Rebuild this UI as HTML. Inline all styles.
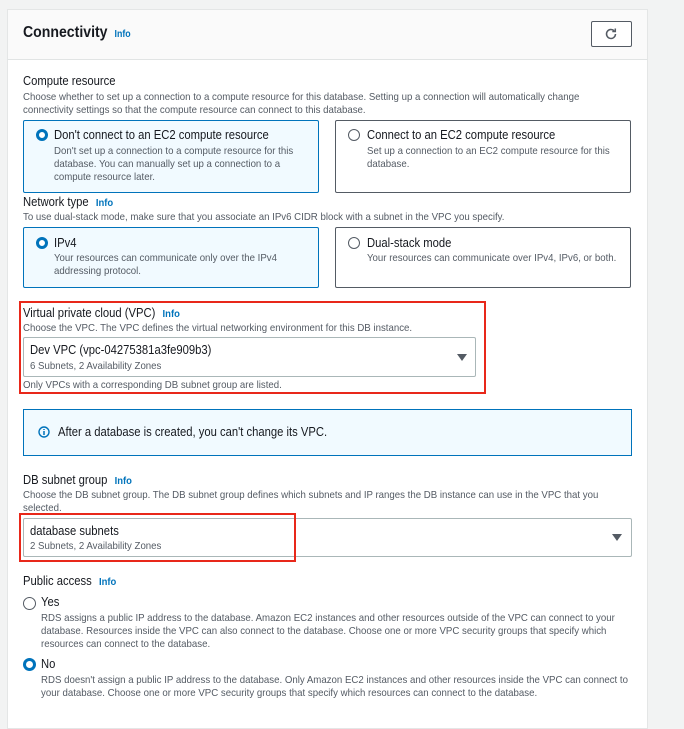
<!DOCTYPE html>
<html><head><meta charset="utf-8"><style>
*{box-sizing:border-box;margin:0;padding:0}
body{width:684px;height:711px;background:#f2f3f3;font-family:"Liberation Sans",sans-serif;color:#16191f;position:relative;overflow:hidden}
.p{position:absolute;left:7px;top:9px;width:641px;height:720px;background:#fff;border:1px solid #e4e6e6}
.hd{position:absolute;left:7px;top:9px;width:641px;height:51px;background:#fafafa;border:1px solid #e4e6e6;border-bottom:1px solid #e1e4e4}
.t{position:absolute;white-space:nowrap;transform-origin:0 0;transform:scaleX(.9)}
.s{font-size:10.5px;color:#545b64;transform:scaleX(.92)}
.l{font-size:12.5px;color:#16191f}
.i{color:#0073bb;font-weight:bold;font-size:10.5px;margin-left:8px}
.card{position:absolute;border:1px solid #545b64;border-radius:2px;background:#fff}
.card.sel{border-color:#0073bb;background:#f1faff}
.r{position:absolute;width:12px;height:12px;border-radius:50%;border:1.5px solid #545b64;background:#fff}
.r.on{border:3.5px solid #0073bb}
.box{position:absolute;border:2px solid #e8281a}
.sel2{position:absolute;border:1px solid #aab7b8;border-radius:2px;background:#fff}
.tri{position:absolute;width:0;height:0;border-left:5px solid transparent;border-right:5px solid transparent;border-top:7px solid #545b64}
</style></head><body>
<div class="p"></div>
<div class="hd"></div>
<div class="t" style="left:23px;top:24px;font-size:16px;font-weight:bold;transform:scaleX(.88)">Connectivity<span class="i" style="font-size:10px">Info</span></div>
<div style="position:absolute;left:591px;top:21px;width:41px;height:26px;border:1px solid #545b64;border-radius:2px;background:#fff"></div>
<svg style="position:absolute;left:603px;top:26px" width="16" height="16" viewBox="0 0 16 16"><path d="M12.5 8a4.5 4.5 0 1 1-1.4-3.3" fill="none" stroke="#545b64" stroke-width="1.5"/><path d="M12.3 2.5v3h-3" fill="none" stroke="#545b64" stroke-width="1.5"/></svg>

<div class="t l" style="left:23px;top:74px">Compute resource</div>
<div class="t s" style="left:23px;top:91px">Choose whether to set up a connection to a compute resource for this database. Setting up a connection will automatically change</div>
<div class="t s" style="left:23px;top:104px">connectivity settings so that the compute resource can connect to this database.</div>
<div class="card sel" style="left:23px;top:120px;width:296px;height:73px"></div>
<div class="r on" style="left:36px;top:129px"></div>
<div class="t l" style="left:54px;top:128px">Don't connect to an EC2 compute resource</div>
<div class="t s" style="left:54px;top:145px">Don't set up a connection to a compute resource for this</div>
<div class="t s" style="left:54px;top:158px">database. You can manually set up a connection to a</div>
<div class="t s" style="left:54px;top:171px">compute resource later.</div>
<div class="card" style="left:335px;top:120px;width:296px;height:73px"></div>
<div class="r" style="left:348px;top:129px"></div>
<div class="t l" style="left:367px;top:128px">Connect to an EC2 compute resource</div>
<div class="t s" style="left:367px;top:145px">Set up a connection to an EC2 compute resource for this</div>
<div class="t s" style="left:367px;top:158px">database.</div>

<div class="t l" style="left:23px;top:195px">Network type<span class="i">Info</span></div>
<div class="t s" style="left:23px;top:211px">To use dual-stack mode, make sure that you associate an IPv6 CIDR block with a subnet in the VPC you specify.</div>
<div class="card sel" style="left:23px;top:227px;width:296px;height:61px"></div>
<div class="r on" style="left:36px;top:237px"></div>
<div class="t l" style="left:54px;top:236px">IPv4</div>
<div class="t s" style="left:54px;top:252px">Your resources can communicate only over the IPv4</div>
<div class="t s" style="left:54px;top:265px">addressing protocol.</div>
<div class="card" style="left:335px;top:227px;width:296px;height:61px"></div>
<div class="r" style="left:348px;top:237px"></div>
<div class="t l" style="left:367px;top:236px">Dual-stack mode</div>
<div class="t s" style="left:367px;top:252px">Your resources can communicate over IPv4, IPv6, or both.</div>

<div class="box" style="left:19px;top:301px;width:467px;height:93px"></div>
<div class="t l" style="left:23px;top:306px">Virtual private cloud (VPC)<span class="i">Info</span></div>
<div class="t s" style="left:23px;top:322px">Choose the VPC. The VPC defines the virtual networking environment for this DB instance.</div>
<div class="sel2" style="left:23px;top:337px;width:453px;height:40px"></div>
<div class="t l" style="left:30px;top:343px">Dev VPC (vpc-04275381a3fe909b3)</div>
<div class="t s" style="left:30px;top:360px">6 Subnets, 2 Availability Zones</div>
<div class="tri" style="left:457px;top:354px"></div>
<div class="t s" style="left:23px;top:379px">Only VPCs with a corresponding DB subnet group are listed.</div>

<div style="position:absolute;left:23px;top:409px;width:609px;height:47px;border:1px solid #0073bb;background:#f1faff"></div>
<svg style="position:absolute;left:38px;top:426px" width="12" height="12" viewBox="0 0 12 12"><circle cx="6" cy="6" r="5" fill="none" stroke="#0073bb" stroke-width="1.4"/><path d="M6 5v4M6 3v1" stroke="#0073bb" stroke-width="1.5"/></svg>
<div class="t l" style="left:58px;top:425px">After a database is created, you can't change its VPC.</div>

<div class="t l" style="left:23px;top:473px">DB subnet group<span class="i">Info</span></div>
<div class="t s" style="left:23px;top:489px">Choose the DB subnet group. The DB subnet group defines which subnets and IP ranges the DB instance can use in the VPC that you</div>
<div class="t s" style="left:23px;top:502px">selected.</div>
<div class="sel2" style="left:23px;top:518px;width:609px;height:39px"></div>
<div class="box" style="left:19px;top:513px;width:277px;height:49px"></div>
<div class="t l" style="left:30px;top:524px">database subnets</div>
<div class="t s" style="left:30px;top:540px">2 Subnets, 2 Availability Zones</div>
<div class="tri" style="left:612px;top:534px"></div>

<div class="t l" style="left:23px;top:574px">Public access<span class="i">Info</span></div>
<div class="r" style="left:23px;top:597px;width:13px;height:13px"></div>
<div class="t l" style="left:41px;top:595px">Yes</div>
<div class="t s" style="left:41px;top:612px">RDS assigns a public IP address to the database. Amazon EC2 instances and other resources outside of the VPC can connect to your</div>
<div class="t s" style="left:41px;top:625px">database. Resources inside the VPC can also connect to the database. Choose one or more VPC security groups that specify which</div>
<div class="t s" style="left:41px;top:638px">resources can connect to the database.</div>
<div class="r on" style="left:23px;top:658px;width:13px;height:13px"></div>
<div class="t l" style="left:41px;top:657px">No</div>
<div class="t s" style="left:41px;top:674px">RDS doesn't assign a public IP address to the database. Only Amazon EC2 instances and other resources inside the VPC can connect to</div>
<div class="t s" style="left:41px;top:687px">your database. Choose one or more VPC security groups that specify which resources can connect to the database.</div>
</body></html>
